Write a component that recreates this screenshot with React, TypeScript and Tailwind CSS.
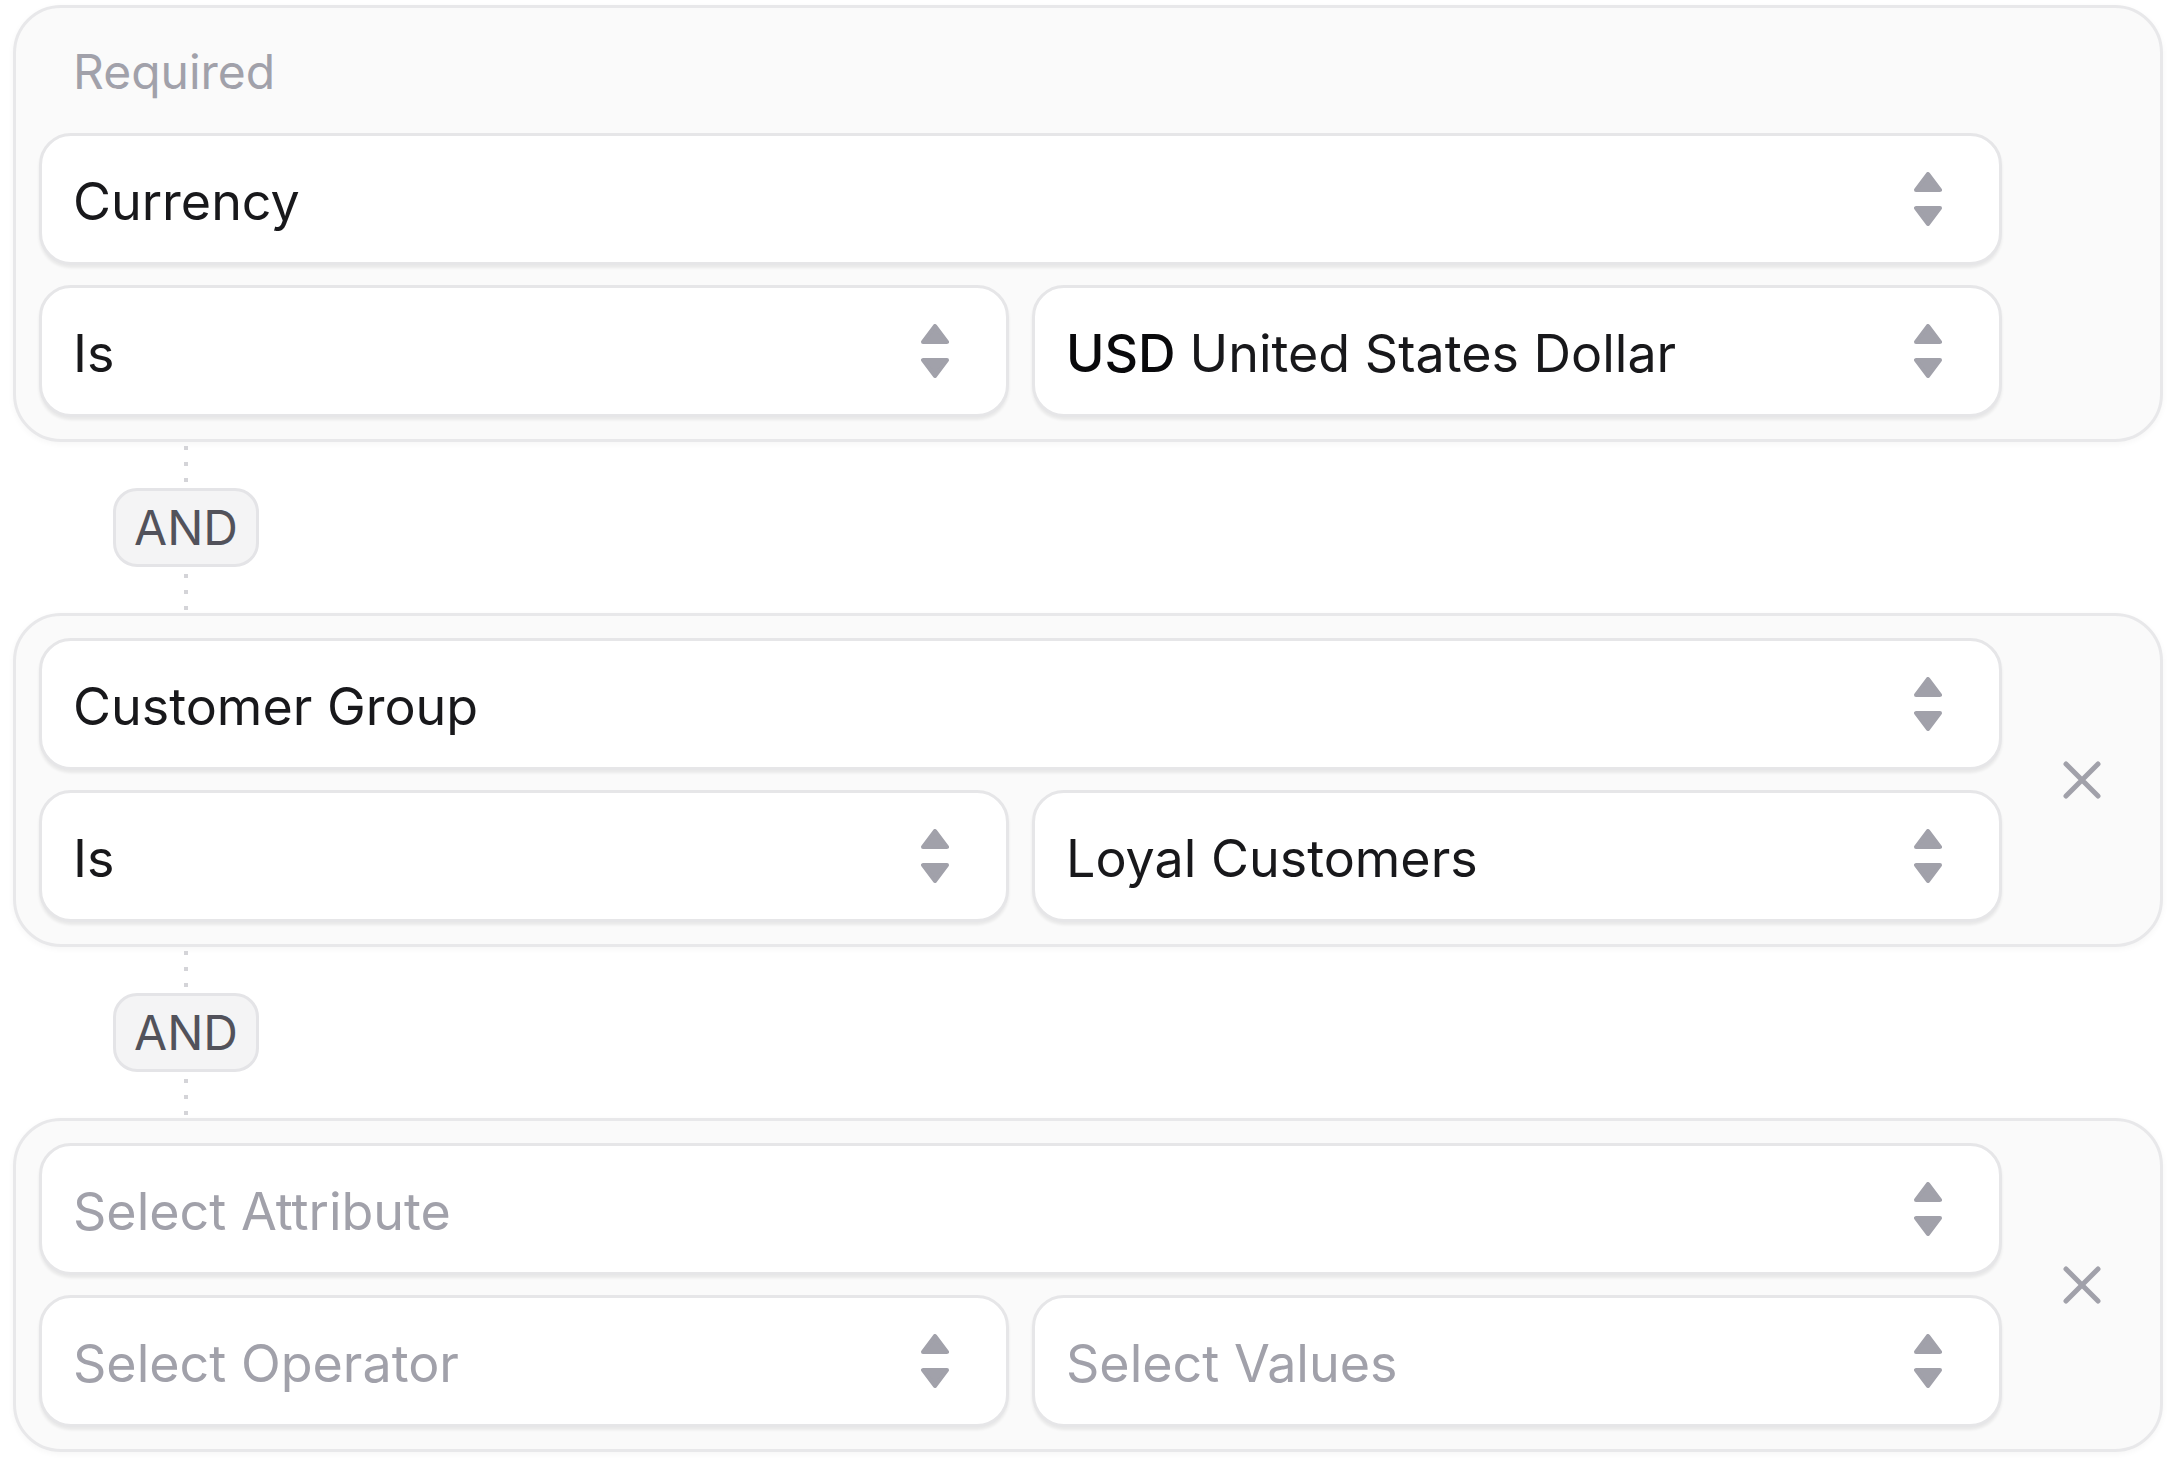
function Chevrons() {
  return (
    <svg width="28" height="54" viewBox="0 0 28 54" className="shrink-0">
      <path d="M14 2 L26 18 L2 18 Z" fill="#a1a1aa" stroke="#a1a1aa" strokeWidth="4" strokeLinejoin="round" />
      <path d="M2 36 L26 36 L14 52 Z" fill="#a1a1aa" stroke="#a1a1aa" strokeWidth="4" strokeLinejoin="round" />
    </svg>
  )
}

function XMark() {
  return (
    <svg width="60" height="60" viewBox="0 0 60 60">
      <path d="M14 14 L46 46 M46 14 L14 46" stroke="#a1a1aa" strokeWidth="5" strokeLinecap="round" />
    </svg>
  )
}

interface SelectProps {
  value?: string
  code?: string
  placeholder?: string
  grow?: boolean
}

function Select({ value, code, placeholder, grow }: SelectProps) {
  return (
    <div
      className={
        (grow ? 'flex-1 ' : '') +
        'flex h-[132px] min-w-0 items-center justify-between rounded-[32px] border-[3px] border-[#e6e6e8] bg-white pl-[31px] pr-[57px] shadow-[0_3px_3px_rgba(0,0,0,0.07)]'
      }
    >
      <span className={value ? 'block pt-[5px] text-[52px] text-[#18181b]' : 'block pt-[5px] text-[52px] text-[#a1a1aa]'}>
        {code && <span className="font-medium text-[#09090b]">{code} </span>}
        {value ?? placeholder}
      </span>
      <Chevrons />
    </div>
  )
}

interface CardProps {
  label?: string
  attribute?: string
  operator?: string
  values?: string
  code?: string
  removable?: boolean
}

function ConditionCard({ label, attribute, operator, values, code, removable }: CardProps) {
  return (
    <div className="flex rounded-[48px] border-[3px] border-[#e8e8ea] bg-[#fafafa] pt-[22px] pb-[22px] pl-[23px] pr-[23px] shadow-[0_2px_6px_rgba(0,0,0,0.04)]">
      <div className="flex flex-1 flex-col gap-[20px]">
        {label && <div className="h-[83px] pl-[34px] text-[48px] leading-[83px] text-[#a1a1aa]">{label}</div>}
        <Select value={attribute} placeholder="Select Attribute" />
        <div className="flex gap-[23px]">
          <Select grow value={operator} placeholder="Select Operator" />
          <Select grow value={values} code={code} placeholder="Select Values" />
        </div>
      </div>
      <div className="ml-[24px] flex w-[111px] items-center justify-center">
        {removable && (
          <button className="flex h-[60px] w-[60px] items-center justify-center">
            <XMark />
          </button>
        )}
      </div>
    </div>
  )
}

function Dots({ first }: { first: number }) {
  return (
    <div className="flex h-[46px] flex-col items-center gap-[12px]" style={{ paddingTop: first }}>
      <div className="h-[4px] w-[4px] bg-[#d4d4d8]" />
      <div className="h-[4px] w-[4px] bg-[#d4d4d8]" />
      <div className="h-[4px] w-[4px] bg-[#d4d4d8]" />
    </div>
  )
}

function AndConnector() {
  return (
    <div className="ml-[100px] flex w-[146px] flex-col items-center">
      <Dots first={4} />
      <div className="flex h-[79px] w-[146px] items-center justify-center rounded-[24px] border-[3px] border-[#e4e4e7] bg-[#f4f4f5] text-[48px] text-[#52525b]">
        AND
      </div>
      <Dots first={7} />
    </div>
  )
}

export default function App() {
  return (
    <div className="min-h-[1472px] w-[2176px] bg-white pt-[5px] pl-[13px]" style={{ fontFamily: 'Inter, "Noto Sans", sans-serif' }}>
      <div className="flex w-[2150px] flex-col">
        <ConditionCard label="Required" attribute="Currency" operator="Is" values="United States Dollar" code="USD" />
        <AndConnector />
        <ConditionCard attribute="Customer Group" operator="Is" values="Loyal Customers" removable />
        <AndConnector />
        <ConditionCard removable />
      </div>
    </div>
  )
}
